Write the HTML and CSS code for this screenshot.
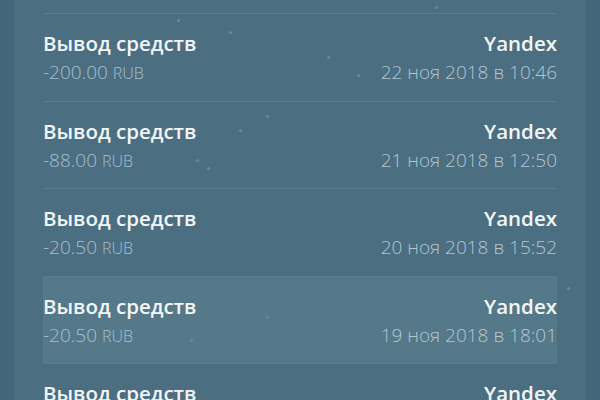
FILE: index.html
```html
<!DOCTYPE html>
<html lang="ru">
<head>
<meta charset="utf-8">
<link rel="stylesheet" href="styles.css">
</head>
<body>
<div class="screen">
  <div class="panel">
    <ul class="list">
      <li class="row spacer"></li>
      <li class="row">
        <div class="left"><div class="title">Вывод средств</div><div class="amount">-200.00 <span class="cur">RUB</span></div></div>
        <div class="right"><div class="title">Yandex</div><div class="date">22 ноя 2018 в 10:46</div></div>
      </li>
      <li class="row">
        <div class="left"><div class="title">Вывод средств</div><div class="amount">-88.00 <span class="cur">RUB</span></div></div>
        <div class="right"><div class="title">Yandex</div><div class="date">21 ноя 2018 в 12:50</div></div>
      </li>
      <li class="row">
        <div class="left"><div class="title">Вывод средств</div><div class="amount">-20.50 <span class="cur">RUB</span></div></div>
        <div class="right"><div class="title">Yandex</div><div class="date">20 ноя 2018 в 15:52</div></div>
      </li>
      <li class="row active">
        <div class="left"><div class="title">Вывод средств</div><div class="amount">-20.50 <span class="cur">RUB</span></div></div>
        <div class="right"><div class="title">Yandex</div><div class="date">19 ноя 2018 в 18:01</div></div>
      </li>
      <li class="row last">
        <div class="left"><div class="title">Вывод средств</div></div>
        <div class="right"><div class="title">Yandex</div></div>
      </li>
    </ul>
    <span class="dot" style="left:162px;top:19px"></span>
    <span class="dot" style="left:214px;top:31px"></span>
    <span class="dot" style="left:420px;top:6px"></span>
    <span class="dot" style="left:312px;top:56px"></span>
    <span class="dot" style="left:342px;top:74px"></span>
    <span class="dot" style="left:224px;top:129px"></span>
    <span class="dot" style="left:181px;top:159px"></span>
    <span class="dot" style="left:192px;top:167px"></span>
    <span class="dot" style="left:251px;top:115px"></span>
    <span class="dot" style="left:251px;top:316px"></span>
    <span class="dot" style="left:175px;top:339px"></span>
    <span class="dot" style="left:552px;top:287px"></span>
  </div>
</div>
</body>
</html>
```
FILE: styles.css
```css
html, body {
  margin: 0;
  padding: 0;
}
body {
  width: 600px;
  height: 400px;
  overflow: hidden;
  background: #43677a;
  font-family: "Open Sans", "Noto Sans", sans-serif;
}
.screen {
  display: flex;
  height: 400px;
  padding: 0 14px 0 14px;
}
.panel {
  position: relative;
  flex: 1;
  background: #4c6e81;
  border-left: 1px solid #4a6c7f;
  border-right: 1px solid #4a6c7f;
  padding: 0 28px;
  overflow: hidden;
}
.list {
  list-style: none;
  margin: 0;
  padding: 0;
}
.row {
  display: flex;
  justify-content: space-between;
  height: 86.5px;
  border-bottom: 1px solid #5b7c8e;
}
.row.spacer {
  height: 13px;
}
.row.last {
  border-bottom: 0;
}
.row.active {
  background: #557989;
}
.left, .right {
  display: flex;
  flex-direction: column;
  padding-top: 15px;
}
.right {
  align-items: flex-end;
}
.title {
  font-size: 20.5px;
  font-weight: 600;
  line-height: 28px;
  color: #f2f6f8;
}
.amount {
  font-size: 19px;
  font-weight: 300;
  line-height: 30px;
  color: #a3c0cd;
}
.cur {
  font-size: 16px;
  font-weight: 300;
}
.date {
  font-size: 19px;
  font-weight: 300;
  line-height: 30px;
  color: #b3c7d1;
}
.dot {
  position: absolute;
  width: 3px;
  height: 3px;
  border-radius: 50%;
  background: #6a8b9c;
}
```
